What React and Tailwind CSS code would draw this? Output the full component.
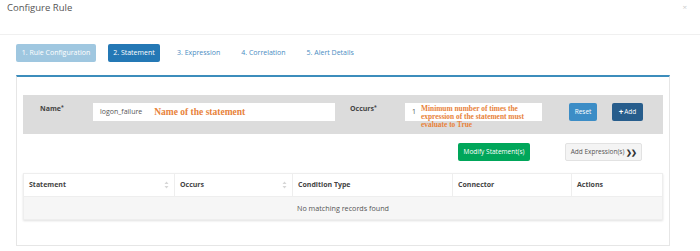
import React from "react";

const SortIcon = () => (
  <svg width="5" height="8" viewBox="0 0 5 8" className="shrink-0">
    <path d="M2.5 0.5 L4.5 3 H0.5 Z" fill="#d6d6d6" />
    <path d="M2.5 7.5 L4.5 5 H0.5 Z" fill="#d6d6d6" />
  </svg>
);

const columns = [
  { label: "Statement", w: "w-[151px]", sort: true },
  { label: "Occurs", w: "w-[118px]", sort: true },
  { label: "Condition Type", w: "w-[160px]" },
  { label: "Connector", w: "w-[119px]" },
  { label: "Actions", w: "flex-1" },
];

export default function App() {
  return (
    <div
      className="relative w-[700px] h-[251px] bg-white text-[#555] overflow-hidden"
      style={{ fontFamily: '"Open Sans", sans-serif' }}
    >
      {/* header */}
      <div className="h-[35px] border-b border-[#f0f0f0] pl-[7px] pt-[1px] flex items-start">
        <span className="text-[9.5px] leading-[14px] text-[#555]">Configure Rule</span>
      </div>
      <span className="absolute right-[13px] top-[1px] text-[8px] text-[#ccc]">×</span>

      {/* tabs */}
      <div className="flex items-center gap-[12px] pl-[16px] mt-[9px] text-[7px]">
        <div className="h-[18px] w-[80px] rounded-[2px] bg-[#9fc7e0] text-white flex items-center justify-center">
          1. Rule Configuration
        </div>
        <div className="h-[18px] w-[52px] rounded-[2px] bg-[#2478b5] text-white flex items-center justify-center">
          2. Statement
        </div>
        <span className="ml-[5px] text-[#4a8cc2]">3. Expression</span>
        <span className="ml-[9px] text-[#4a8cc2]">4. Correlation</span>
        <span className="ml-[9px] text-[#4a8cc2]">5. Alert Details</span>
      </div>

      {/* panel */}
      <div className="ml-[16px] mr-[30px] mt-[13px] h-[171px] border border-[#e6e6e6] border-t-2 border-t-[#3c8dbc] px-[6px] pt-[18px]">
        {/* form bar */}
        <div className="h-[39px] bg-[#dcdcdc] flex items-start pt-[8px] text-[7px]">
          <div className="w-[70px] pl-[17px] pt-[1px] font-bold text-[#444]">
            Name<sup className="text-[5px]">*</sup>
          </div>
          <div className="w-[242px] h-[18px] bg-white flex items-center pl-[7px] gap-[12px]">
            <span className="text-[#555]">logon_failure</span>
            <span
              className="text-[#e8823a] font-bold text-[9.5px]"
              style={{ fontFamily: '"Liberation Serif", serif' }}
            >
              Name of the statement
            </span>
          </div>
          <div className="w-[70px] pl-[15px] pt-[1px] font-bold text-[#444]">
            Occurs<sup className="text-[5px]">*</sup>
          </div>
          <div className="relative w-[137px] h-[18px] bg-white pl-[7px] flex items-start pt-[2px]">
            <span className="text-[#555] mt-[2px]">1</span>
            <span
              className="ml-[5px] text-[#e8823a] font-bold text-[7.4px] leading-[8px] whitespace-pre"
              style={{ fontFamily: '"Liberation Serif", serif' }}
            >
              {"Minimum number of times the\nexpression of the statement must\nevaluate to True"}
            </span>
          </div>
          <div className="ml-[27px] h-[18px] w-[28px] rounded-[2px] bg-[#3c8dc6] text-white text-[6.5px] flex items-center justify-center">
            Reset
          </div>
          <div className="ml-[15px] h-[18px] w-[31px] rounded-[2px] bg-[#275d8c] text-white text-[6.5px] flex items-center justify-center gap-[1px]">
            <span className="font-bold text-[8px] leading-none">+</span>Add
          </div>
        </div>

        {/* action buttons */}
        <div className="flex justify-end gap-[35px] mt-[9px] pr-[21px] text-[6.5px]">
          <div className="h-[18px] w-[72px] rounded-[2px] bg-[#00a65a] text-white flex items-center justify-center">
            Modify Statement(s)
          </div>
          <div className="h-[18px] w-[77px] rounded-[2px] bg-[#f4f4f4] border border-[#e2e2e2] text-[#555] flex items-center justify-center gap-[2px]">
            Add Expression(s)
            <span className="font-bold text-[#333] text-[7px] leading-none tracking-[-1px]">❯❯</span>
          </div>
        </div>

        {/* table */}
        <div className="mt-[12px] border border-[#eee] shadow-[0_1px_2px_rgba(0,0,0,0.12)] text-[7px]">
          <div className="flex h-[23px] bg-white border-b border-[#eee]">
            {columns.map((c, i) => (
              <div
                key={c.label}
                className={`${c.w} flex items-center justify-between px-[5px] font-bold text-[#444] ${
                  i < columns.length - 1 ? "border-r border-[#eee]" : ""
                }`}
              >
                <span>{c.label}</span>
                {c.sort && <SortIcon />}
              </div>
            ))}
          </div>
          <div className="h-[22px] bg-[#f6f6f6] flex items-center justify-center text-[#555] text-[7.2px]">
            No matching records found
          </div>
        </div>
      </div>
    </div>
  );
}
